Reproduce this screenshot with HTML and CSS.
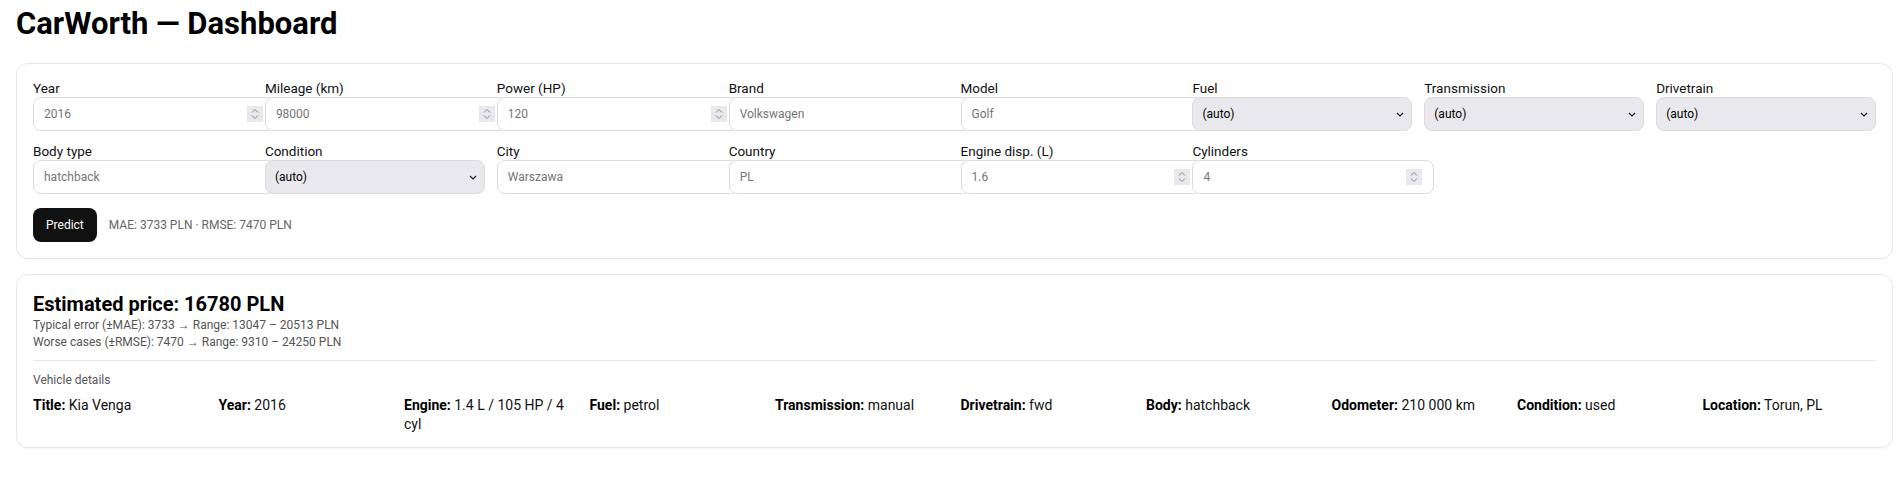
FILE: index.html
```html
<!DOCTYPE html>
<html lang="en">
<head>
<meta charset="utf-8">
<title>CarWorth — Dashboard</title>
<link rel="stylesheet" href="styles.css">
</head>
<body>
<div class="page">
  <h1 class="title">CarWorth — Dashboard</h1>

  <section class="card form-card">
    <div class="form-grid">
      <div class="field"><label class="lbl">Year</label><div class="ctl"><input class="inp" type="number" placeholder="2016"><span class="spin"><svg width="16" height="16" viewBox="0 0 16 16"><path d="M5 6.5 L8 3.5 L11 6.5 M5 9.5 L8 12.5 L11 9.5" fill="none" stroke="#8a8a8a" stroke-width="1"/></svg></span></div></div>
      <div class="field"><label class="lbl">Mileage (km)</label><div class="ctl"><input class="inp" type="number" placeholder="98000"><span class="spin"><svg width="16" height="16" viewBox="0 0 16 16"><path d="M5 6.5 L8 3.5 L11 6.5 M5 9.5 L8 12.5 L11 9.5" fill="none" stroke="#8a8a8a" stroke-width="1"/></svg></span></div></div>
      <div class="field"><label class="lbl">Power (HP)</label><div class="ctl"><input class="inp" type="number" placeholder="120"><span class="spin"><svg width="16" height="16" viewBox="0 0 16 16"><path d="M5 6.5 L8 3.5 L11 6.5 M5 9.5 L8 12.5 L11 9.5" fill="none" stroke="#8a8a8a" stroke-width="1"/></svg></span></div></div>
      <div class="field"><label class="lbl">Brand</label><div class="ctl"><input class="inp" type="text" placeholder="Volkswagen"></div></div>
      <div class="field"><label class="lbl">Model</label><div class="ctl"><input class="inp" type="text" placeholder="Golf"></div></div>
      <div class="field"><label class="lbl">Fuel</label><div class="ctl"><select class="sel"><option>(auto)</option></select><svg class="chev" width="8" height="5" viewBox="0 0 8 5"><path d="M1 1 L4 4 L7 1" fill="none" stroke="#222" stroke-width="1.2"/></svg></div></div>
      <div class="field"><label class="lbl">Transmission</label><div class="ctl"><select class="sel"><option>(auto)</option></select><svg class="chev" width="8" height="5" viewBox="0 0 8 5"><path d="M1 1 L4 4 L7 1" fill="none" stroke="#222" stroke-width="1.2"/></svg></div></div>
      <div class="field"><label class="lbl">Drivetrain</label><div class="ctl"><select class="sel"><option>(auto)</option></select><svg class="chev" width="8" height="5" viewBox="0 0 8 5"><path d="M1 1 L4 4 L7 1" fill="none" stroke="#222" stroke-width="1.2"/></svg></div></div>

      <div class="field"><label class="lbl">Body type</label><div class="ctl"><input class="inp" type="text" placeholder="hatchback"></div></div>
      <div class="field"><label class="lbl">Condition</label><div class="ctl"><select class="sel"><option>(auto)</option></select><svg class="chev" width="8" height="5" viewBox="0 0 8 5"><path d="M1 1 L4 4 L7 1" fill="none" stroke="#222" stroke-width="1.2"/></svg></div></div>
      <div class="field"><label class="lbl">City</label><div class="ctl"><input class="inp" type="text" placeholder="Warszawa"></div></div>
      <div class="field"><label class="lbl">Country</label><div class="ctl"><input class="inp" type="text" placeholder="PL"></div></div>
      <div class="field"><label class="lbl">Engine disp. (L)</label><div class="ctl"><input class="inp" type="number" placeholder="1.6"><span class="spin"><svg width="16" height="16" viewBox="0 0 16 16"><path d="M5 6.5 L8 3.5 L11 6.5 M5 9.5 L8 12.5 L11 9.5" fill="none" stroke="#8a8a8a" stroke-width="1"/></svg></span></div></div>
      <div class="field"><label class="lbl">Cylinders</label><div class="ctl"><input class="inp" type="number" placeholder="4"><span class="spin"><svg width="16" height="16" viewBox="0 0 16 16"><path d="M5 6.5 L8 3.5 L11 6.5 M5 9.5 L8 12.5 L11 9.5" fill="none" stroke="#8a8a8a" stroke-width="1"/></svg></span></div></div>
    </div>
    <div class="actions">
      <button class="btn" type="button">Predict</button>
      <span class="metrics">MAE: 3733 PLN · RMSE: 7470 PLN</span>
    </div>
  </section>

  <section class="card result-card">
    <h2 class="price">Estimated price: 16780 PLN</h2>
    <div class="range">Typical error (±MAE): 3733 → Range: 13047 – 20513 PLN</div>
    <div class="range">Worse cases (±RMSE): 7470 → Range: 9310 – 24250 PLN</div>
    <hr class="sep">
    <div class="subhead">Vehicle details</div>
    <div class="details">
      <div class="item"><b>Title:</b> Kia Venga</div>
      <div class="item"><b>Year:</b> 2016</div>
      <div class="item"><b>Engine:</b> 1.4 L / 105 HP / 4 cyl</div>
      <div class="item"><b>Fuel:</b> petrol</div>
      <div class="item"><b>Transmission:</b> manual</div>
      <div class="item"><b>Drivetrain:</b> fwd</div>
      <div class="item"><b>Body:</b> hatchback</div>
      <div class="item"><b>Odometer:</b> 210 000 km</div>
      <div class="item"><b>Condition:</b> used</div>
      <div class="item"><b>Location:</b> Torun, PL</div>
    </div>
  </section>
</div>
</body>
</html>
```

FILE: styles.css
```css
* { margin: 0; }
html, body { background: #fff; }
body {
  font-family: "Segoe UI", Roboto, "Liberation Sans", sans-serif;
  color: #111;
}
.page {
  padding: 6px 10px 16px 16px;
}
.title {
  font-size: 31px;
  font-weight: 700;
  line-height: 36px;
  margin-bottom: 21px;
  color: #000;
}
.card {
  border: 1px solid #e8e8e8;
  border-radius: 12px;
  padding: 16px;
  background: #fff;
  box-shadow: 0 1px 2px rgba(0,0,0,0.04);
}
.form-grid {
  display: grid;
  grid-template-columns: repeat(8, 1fr);
  gap: 12px;
}
.field {
  display: flex;
  flex-direction: column;
  min-width: 0;
}
.lbl {
  font-size: 13.5px;
  line-height: 17px;
  color: #111;
}
.ctl {
  position: relative;
  height: 34px;
}
.inp {
  display: block;
  width: 100%;
  height: 16px;
  padding: 8px 10px;
  border: 1px solid #dcdcdc;
  border-radius: 8px;
  font-family: inherit;
  font-size: 12px;
  background: #fff;
  color: #111;
  box-sizing: content-box;
  -moz-appearance: textfield;
}
.inp::-webkit-inner-spin-button,
.inp::-webkit-outer-spin-button {
  -webkit-appearance: none;
  margin: 0;
}
.inp::placeholder { color: #767676; }
.spin {
  position: absolute;
  top: 9px;
  left: calc(100% - 6px);
  width: 16px;
  height: 16px;
  background: #e9e9ed;
  display: flex;
}
.sel {
  display: block;
  width: 100%;
  height: 34px;
  padding: 0 20px 0 9px;
  border: 1px solid #dcdcdc;
  border-radius: 8px;
  background-color: #e9e9ed;
  font-family: inherit;
  font-size: 12px;
  color: #000;
  box-sizing: border-box;
  -webkit-appearance: none;
  appearance: none;
}
.chev {
  position: absolute;
  right: 8px;
  top: 15px;
  pointer-events: none;
}
.actions {
  display: flex;
  align-items: center;
  gap: 12px;
  margin-top: 14px;
}
.btn {
  height: 34px;
  padding: 0 13px;
  background: #111;
  color: #fff;
  border: 0;
  border-radius: 8px;
  font-family: inherit;
  font-size: 12px;
}
.metrics {
  font-size: 12px;
  color: #666;
}
.result-card {
  margin-top: 15px;
  padding-bottom: 13px;
}
.price {
  font-size: 20px;
  font-weight: 700;
  line-height: 26px;
  color: #000;
}
.range {
  font-size: 12px;
  line-height: 17px;
  color: #555;
}
.sep {
  border: 0;
  border-top: 1px solid #e8e8e8;
  margin: 9px 0 11px;
}
.subhead {
  font-size: 12px;
  line-height: 17px;
  color: #555;
  margin-bottom: 7px;
}
.details {
  display: grid;
  grid-template-columns: repeat(10, 1fr);
  gap: 12px;
  font-size: 14px;
  line-height: 19px;
  color: #111;
}
.item b { font-weight: 700; color: #000; }
```
